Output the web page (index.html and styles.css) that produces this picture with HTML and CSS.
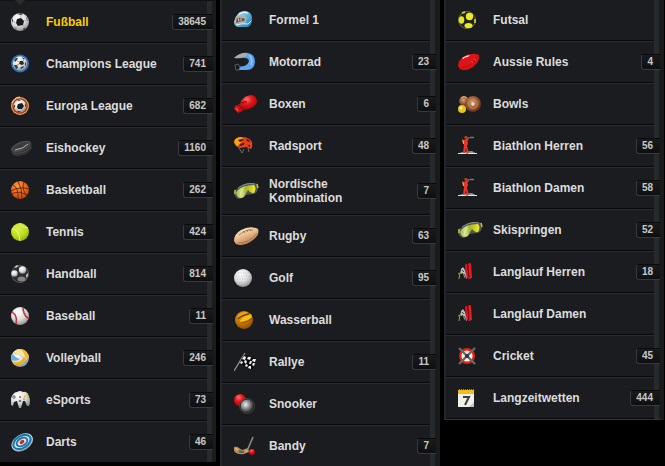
FILE: index.html
```html
<!DOCTYPE html>
<html lang="de">
<head>
  <meta charset="UTF-8">
  <meta name="viewport" content="width=device-width, initial-scale=1">
  <title>Sportarten</title>
  <link rel="stylesheet" href="styles.css">
</head>
<body>

<!-- Icons -->
<svg class="sprite" aria-hidden="true">
  <defs>
    <radialGradient id="g-white" cx=".4" cy=".3" r=".75"><stop offset="0" stop-color="#fff"/><stop offset=".55" stop-color="#dcdcdc"/><stop offset="1" stop-color="#888"/></radialGradient>
    <radialGradient id="g-orange" cx=".4" cy=".3" r=".75"><stop offset="0" stop-color="#ff9a3c"/><stop offset=".6" stop-color="#e8631a"/><stop offset="1" stop-color="#b53c08"/></radialGradient>
    <radialGradient id="g-lime" cx=".4" cy=".3" r=".75"><stop offset="0" stop-color="#e0f048"/><stop offset=".6" stop-color="#bcdc1c"/><stop offset="1" stop-color="#8dae08"/></radialGradient>
    <radialGradient id="g-red" cx=".4" cy=".3" r=".75"><stop offset="0" stop-color="#ff7a70"/><stop offset=".4" stop-color="#e8181c"/><stop offset="1" stop-color="#a00408"/></radialGradient>
    <radialGradient id="g-black" cx=".4" cy=".4" r=".65"><stop offset="0" stop-color="#f0f0f0"/><stop offset=".5" stop-color="#808080"/><stop offset="1" stop-color="#151515"/></radialGradient>
    <radialGradient id="g-brown" cx=".45" cy=".4" r=".65"><stop offset="0" stop-color="#d9a27a"/><stop offset=".5" stop-color="#a0623a"/><stop offset="1" stop-color="#4c2610"/></radialGradient>
    <radialGradient id="g-gold" cx=".4" cy=".3" r=".75"><stop offset="0" stop-color="#e8a010"/><stop offset=".5" stop-color="#c87808"/><stop offset="1" stop-color="#8a4a04"/></radialGradient>
    <linearGradient id="g-rugby" x1="0" y1="0" x2=".6" y2="1"><stop offset="0" stop-color="#fff0d4"/><stop offset=".5" stop-color="#eac294"/><stop offset="1" stop-color="#b07840"/></linearGradient>
    <linearGradient id="g-sky" x1="0" y1="0" x2="1" y2="1"><stop offset="0" stop-color="#dff3fb"/><stop offset=".5" stop-color="#5fb6dc"/><stop offset="1" stop-color="#1478b4"/></linearGradient>
    <linearGradient id="g-lens"><stop offset="0" stop-color="#a9bf52"/><stop offset=".3" stop-color="#d4e08a"/><stop offset=".5" stop-color="#a4b820"/><stop offset="1" stop-color="#f4ea30"/></linearGradient>
  </defs>

  <symbol id="football" viewBox="0 0 25 20">
    <circle cx="9" cy="10" r="9" fill="url(#g-white)"/>
    <path d="M6 7l4-1 3 3-1 4-5 1-2-3z" fill="#181818"/>
    <path d="M6 2l4-1 2 1-2 1zM1 8l1-2 0 3-1 2zM15 5l1 1 1 3-1-1zM3 15l2 1 1 2-2-2zM12 17l1-1 2 0-2 2z" fill="#3c3c3c"/>
    <path d="M10 6V3M13 9l3-1M12 13l2 3M7 14l-2 2M5 11l-3-2" stroke="#999" stroke-width=".6" fill="none"/>
  </symbol>

  <symbol id="champions" viewBox="0 0 25 20">
    <circle cx="9" cy="9.500" r="9" fill="#2c70c6"/>
    <circle cx="9" cy="9.500" r="7.200" fill="url(#g-white)"/>
    <path d="M9 7l3 0 1 3-2 1-3-1z" fill="#2a2a2a"/>
    <path d="M3 6l2-2 2 0-1 2-2 2zM11 3l3 2-2 0zM3 11l3 0 1 3-2 1zM9 14l3-2 1 1-3 2zM14 8l1 1 0 3-1-1z" fill="#3a3a3a"/>
    <path d="M6 7l3 1M6 11l2-1M12 7l1-2" stroke="#888" stroke-width=".8"/>
  </symbol>

  <symbol id="europa" viewBox="0 0 25 20">
    <circle cx="9" cy="10" r="9" fill="#f0a83c"/>
    <circle cx="9" cy="10" r="7.800" fill="#a8341c"/>
    <circle cx="9" cy="10" r="6.400" fill="url(#g-white)"/>
    <path d="M7 8l4-1 2 3-2 3-4 0-1-2z" fill="#1c1c1c"/>
    <path d="M6 4l4 0-2 1zM3 9l1 0 0 3-1-1zM14 7l1 2 0 2-1-1zM6 15l2 0 2 1-3 0z" fill="#333"/>
    <path d="M1 7a9 9 0 0 1 8-6" stroke="#f8e4b0" fill="none"/>
  </symbol>

  <symbol id="puck" viewBox="0 0 25 20">
    <path d="M0 11L1 16Q3 19 9 18Q15 17 19 13Q21 11 21 9L20 4Z" fill="#323232"/>
    <ellipse cx="10" cy="8.500" rx="10.500" ry="4.500" transform="rotate(-21 10 8.500)" fill="#4c4c4c"/>
    <ellipse cx="10" cy="8.500" rx="8.500" ry="3" transform="rotate(-21 10 8.500)" fill="#3a3a3a"/>
    <path d="M4 12Q12 11 17 6" stroke="#b8b8b8" fill="none"/>
    <path d="M2 15Q13 17 20 9" stroke="#4a4a4a" fill="none"/>
  </symbol>

  <symbol id="basketball" viewBox="0 0 25 20">
    <circle cx="9" cy="10" r="9" fill="url(#g-orange)"/>
    <path d="M0 11Q9 6 18 9M7 1Q11 8 11 19M2 5Q8 8 7 19M13 2Q10 9 16 16M1 14q6-4 15 1" stroke="#5e240c" stroke-width=".9" fill="none"/>
  </symbol>

  <symbol id="tennis" viewBox="0 0 25 20">
    <circle cx="9" cy="10" r="9" fill="url(#g-lime)"/>
    <path d="M1 7Q8 7 9 19M9 1q0 4 8 5" stroke="#ecf69c" fill="none"/>
  </symbol>

  <symbol id="handball" viewBox="0 0 25 20">
    <circle cx="9" cy="10" r="9" fill="#5a5a5a"/>
    <circle cx="9" cy="10" r="8" fill="#2c2c2c"/>
    <circle cx="11.500" cy="6" r="3.700" fill="url(#g-white)"/>
    <circle cx="3.500" cy="9.500" r="3.200" fill="url(#g-white)"/>
    <ellipse cx="10.500" cy="15" rx="4" ry="2.500" fill="#858585"/>
    <path d="M15 11l2-2 0 3-2 2zM3 3l3-2 2 1-3 2z" fill="#bbb"/>
  </symbol>

  <symbol id="baseball" viewBox="0 0 25 20">
    <circle cx="9" cy="10" r="9" fill="url(#g-white)"/>
    <path d="M1 6Q7 10 5 18M12 2Q12 9 18 13" stroke="#c8202c" stroke-width="1.400" fill="none"/>
    <path d="M3 9l2-1M4 12h2M4 15l2 0M12 6l2-1M13 9l2-2" stroke="#d8505a" stroke-width=".8"/>
  </symbol>

  <symbol id="volleyball" viewBox="0 0 25 20">
    <circle cx="9" cy="10" r="9" fill="url(#g-white)"/>
    <path d="M9 1Q16 1 18 9L14 10Q14 5 9 1Z" fill="#f5bd1c"/>
    <path d="M2 5Q5 1 8 1Q12 5 12 9Q8 4 2 5Z" fill="#fbe28a"/>
    <path d="M1 14Q9 16 13 9L15 11Q12 18 4 17Z" fill="#f0b418"/>
    <path d="M0 10Q0 8 2 6Q4 10 9 11Q5 14 1 12ZM12 16l5-5q0 4-4 7z" fill="#68b0dc"/>
    <path d="M3 5Q8 6 13 10M5 17Q13 17 17 11" stroke="#b9a468" stroke-width=".6" fill="none"/>
  </symbol>

  <symbol id="gamepad" viewBox="0 0 25 20">
    <path d="M1 6Q3 2 6 2Q9 0 12 2Q16 1 18 6Q20 12 18 16L16 16L14 11L12 11L10 18L8 18L6 11L3 12L2 16L0 15Q-1 10 1 6Z" fill="url(#g-white)"/>
    <path d="M1 7h4M3 5v4" stroke="#777" stroke-width="1.200"/>
    <circle cx="9" cy="7" r="1" fill="#d83030"/>
    <circle cx="9" cy="11" r="1.300" fill="#777"/>
    <circle cx="16" cy="4.500" r="1" fill="#e8b820"/><circle cx="14" cy="6.500" r="1" fill="#e8b820"/><circle cx="17" cy="7" r="1" fill="#e8b820"/>
    <circle cx="13" cy="9" r=".8" fill="#3c9c50"/>
  </symbol>

  <symbol id="darts" viewBox="0 0 25 20">
    <g transform="rotate(-32 11 10)">
      <ellipse cx="11" cy="11" rx="11.500" ry="7.500" fill="#8a9098"/>
      <ellipse cx="11" cy="10" rx="11.500" ry="7.500" fill="#dce8f0"/>
      <ellipse cx="11" cy="10" rx="9.500" ry="6" fill="none" stroke="#1c78ac" stroke-width="2.200"/>
      <ellipse cx="11" cy="10" rx="5.800" ry="3.600" fill="none" stroke="#1c78ac" stroke-width="2"/>
      <ellipse cx="11" cy="10" rx="2.600" ry="1.800" fill="#e02020"/>
    </g>
  </symbol>

  <symbol id="formel" viewBox="0 0 25 20">
    <path d="M2 7Q5 0 12 1Q18 2 18 9Q18 15 14 17L3 17Q0 15 0 12Z" fill="url(#g-sky)"/>
    <path d="M2 6Q8 5 13 7L12 13Q6 13 1 15L0 12Z" fill="#b0b0ae"/>
    <path d="M3 8Q7 7 11 9L10 11Q6 11 2 13Z" fill="#5a5854"/>
    <path d="M4 8l1 3M7 8l0 3" stroke="#d8c8b4"/>
    <path d="M2 15q6-2 12-1l3-3" stroke="#e4f4fa" fill="none"/>
    <path d="M5 4q4-3 9-1" stroke="#fff" fill="none"/>
  </symbol>

  <symbol id="motorrad" viewBox="0 0 25 20">
    <path d="M0 6Q5 1 12 1Q21 1 21 10Q20 18 13 18L5 18L3 14Q10 16 14 11Q15 8 11 6Z" fill="#5ca4f0"/>
    <path d="M0 6Q7 0 14 1L12 4Q10 7 0 6Z" fill="#a8acb0"/>
    <path d="M7 6Q14 5 15 9Q14 13 9 14L6 14Q12 13 13 10Q12 7 7 7Z" fill="#1c2228"/>
    <path d="M15 3q4 4 2 10" stroke="#94c6f8" stroke-width="1.500" fill="none"/>
    <path d="M1 13L4 12L6 15L5 18L2 18Z" fill="#17191b" stroke="#777" stroke-width=".7"/>
  </symbol>

  <symbol id="boxen" viewBox="0 0 25 20">
    <path d="M7 7Q11 1 18 1Q23 3 23 8Q22 12 17 14L11 16L6 11Z" fill="url(#g-red)"/>
    <path d="M1 12L6 10L10 16L4 19L0 15Z" fill="#d01216"/>
    <path d="M5 11l4 6M8 9q2-2 5-1" stroke="#6c0408" fill="none"/>
    <path d="M2 14l2 3" stroke="#f47a70"/>
  </symbol>

  <symbol id="radsport" viewBox="0 0 25 20">
    <path d="M0 6Q1 1 8 1Q15 1 18 6Q19 11 17 13L12 11L6 12Q1 11 0 6Z" fill="#e4401c"/>
    <path d="M0 6Q1 1 8 1L9 4L4 10Q1 9 0 6Z" fill="#f6a41c"/>
    <path d="M4 4l4-1 2 1-4 2zM5 9l4-2 2 1-4 2zM12 3l3 1 1 2-3-1zM13 9l3 0 0 2z" fill="#44140c"/>
    <path d="M5 12l3 5 2-4M14 12l1 4" stroke="#707478" stroke-width=".9" fill="none"/>
  </symbol>

  <symbol id="goggles" viewBox="0 0 25 20">
    <path d="M1 9L0 13Q2 18 6 18L12 14L19 13Q24 12 24 7L23 3Q14 0 6 6Z" fill="#50565a"/>
    <path d="M3 10Q8 4 20 4Q23 7 20 12Q17 13 14 9Q12 12 10 16Q6 18 4 16Q1 13 3 10Z" fill="url(#g-lens)"/>
    <path d="M4 7Q12 1 21 3" stroke="#a0a4a8" stroke-width=".8" fill="none"/>
    <path d="M1 9l0 4M23 3l1 4" stroke="#b8d410" stroke-width="1.500"/>
    <path d="M8 8l-2 7" stroke="#e4ecb0"/>
  </symbol>

  <symbol id="rugby" viewBox="0 0 25 20">
    <path d="M0 15Q0 8 7 4Q16 -1 24 3Q26 9 19 14Q10 21 2 18Z" fill="url(#g-rugby)"/>
    <path d="M5 9Q12 3 19 4M4 17Q16 17 23 7" stroke="#9a6c44" stroke-width=".8" fill="none"/>
    <path d="M9 5l2 2M12 4l2 2M15 3l2 2" stroke="#806048" stroke-width=".7"/>
  </symbol>

  <symbol id="golf" viewBox="0 0 25 20">
    <circle cx="9" cy="10" r="9" fill="url(#g-white)"/>
    <path d="M4 5h11M2 8h14M3 11h13M3 14h12M6 17h7" stroke="#b4b4b4" stroke-width=".8" stroke-dasharray="1 1.500"/>
  </symbol>

  <symbol id="wasserball" viewBox="0 0 25 20">
    <circle cx="10" cy="10" r="9" fill="url(#g-gold)"/>
    <path d="M6 11Q9 6 17 4L18 7Q14 11 7 12Z" fill="#f8c010"/>
    <path d="M4 6Q7 2 12 2L14 3Q8 5 5 8Z" fill="#f0a810"/>
    <path d="M4 9Q8 5 15 4" stroke="#784404" stroke-width="1.300" fill="none"/>
    <path d="M7 13Q14 12 19 8" stroke="#84500a" fill="none"/>
  </symbol>

  <symbol id="rallye" viewBox="0 0 25 20">
    <path d="M0 19L11 1" stroke="#999" stroke-width="1.200"/>
    <path d="M10 3Q14 6 22 6L19 17Q11 16 6 10Z" fill="#0b0b0b"/>
    <path d="M10 4l2 1-1 3-3-1zM14 5l3 0-1 3-3-1zM19 7l3 0-1 3-3-1zM11 8l2 1-1 3-2-2zM16 9l2 0-1 3-2 0zM7 9l2 1-1 2-2-1zM12 12l2 1-1 2-2-1zM19 11l2 0-1 3-2-1zM15 14l2 0 0 3-3-1z" fill="#f4f4f4"/>
  </symbol>

  <symbol id="snooker" viewBox="0 0 25 20">
    <circle cx="6" cy="6" r="6" fill="url(#g-red)"/>
    <circle cx="13" cy="12" r="7" fill="url(#g-black)" stroke="#080808"/>
    <circle cx="13" cy="12" r="7.300" fill="none" stroke="#666" stroke-width=".7"/>
  </symbol>

  <symbol id="bandy" viewBox="0 0 25 20">
    <path d="M19 1L13 15" stroke="#8c8c84" stroke-width="1.600"/>
    <path d="M0 11Q3 10 5 12L8 14L14 12L15 16L10 18Q3 19 0 15Z" fill="#b98a5c"/>
    <path d="M5 14l5 1 0 2-5 0z" fill="#5c6850"/>
    <path d="M1 12l3 2M12 14l1 2" stroke="#e8cc9c"/>
    <circle cx="18" cy="16" r="3" fill="url(#g-red)"/>
  </symbol>

  <symbol id="futsal" viewBox="0 0 25 20">
    <circle cx="9" cy="10" r="8.500" fill="#20221c" stroke="#686c40"/>
    <circle cx="11.500" cy="6.500" r="3.700" fill="#ecea28"/>
    <ellipse cx="3.500" cy="10" rx="2.800" ry="3.700" fill="#e4e424"/>
    <ellipse cx="10.500" cy="15.500" rx="4" ry="2.600" fill="#ecea28"/>
    <path d="M4 3l3-1M17 9l0 4" stroke="#e4e424" stroke-width="1.500"/>
  </symbol>

  <symbol id="aussie" viewBox="0 0 25 20">
    <path d="M0 14Q0 8 7 4Q15 0 21 3Q22 9 16 14Q9 20 2 17Z" fill="#dc1418"/>
    <path d="M4 6Q8 3 12 3L10 5Q7 5 5 7Z" fill="#f8c8c0"/>
    <path d="M3 16Q15 14 20 4" stroke="#a8080c" stroke-width=".8" fill="none"/>
    <path d="M13 9l2 2M16 7l2 1" stroke="#f08078" stroke-width=".6"/>
  </symbol>

  <symbol id="bowls" viewBox="0 0 25 20">
    <circle cx="6" cy="7" r="5" fill="url(#g-brown)"/>
    <path d="M3 4q3-3 6 0" stroke="#e0b890" fill="none"/>
    <circle cx="15" cy="10" r="8" fill="url(#g-brown)"/>
    <circle cx="15" cy="10" r="4.500" fill="none" stroke="#c08458"/>
    <circle cx="15" cy="10" r="1.700" fill="#f2d8bc"/>
    <circle cx="4" cy="15" r="4" fill="#e4c420"/>
    <circle cx="3" cy="14" r="1.500" fill="#fbf090"/>
  </symbol>

  <symbol id="biathlon" viewBox="0 0 25 20">
    <path d="M0 18L4 16L14 15L19 18Z" fill="#8e9296"/>
    <path d="M0 17.500h8M10 17.500h9" stroke="#e4e6e8"/>
    <path d="M5 4L9 3L10 7L9 10L11 17L9 17L8 12L7 17L5 17L6 9Z" fill="#e8362a"/>
    <circle cx="8" cy="1.500" r="1.600" fill="#b84028"/>
    <path d="M4 3l2 2 0 3-1 0z" fill="#f4a020"/>
    <path d="M8 5l3-3" stroke="#e84030" stroke-width="1.300"/>
    <path d="M9 1.500h7" stroke="#505860"/><path d="M12 1.500h4" stroke="#5c7ca0" stroke-width="1.500"/>
  </symbol>

  <symbol id="langlauf" viewBox="0 0 25 20">
    <path d="M7 4Q7 1 9 2L11 17L8 15Z" fill="#d0181e"/>
    <path d="M10 2Q12 0 13 2L14 16L11 17Z" fill="#e41c24"/>
    <path d="M10 3l1 13" stroke="#7c0810" stroke-width=".8"/>
    <path d="M1 17Q1 12 4 7M0 12l4-2" stroke="#98ac28" fill="none"/>
    <path d="M3 7L5 5L7 8L9 17L6 15L5 11L3 12Z" fill="#b8bcc0"/>
    <path d="M4 8l2 2M6 12l2 4" stroke="#3c4044"/>
  </symbol>

  <symbol id="cricket" viewBox="0 0 25 20">
    <circle cx="9" cy="10" r="6.800" fill="#f6f0ee" stroke="#e8200c" stroke-width="2.400"/>
    <path d="M1 2L17 18M17 2L1 18" stroke="#66686a" stroke-width="2.400"/>
    <circle cx="9" cy="10" r="2" fill="#303234"/>
  </symbol>

  <symbol id="kalender" viewBox="0 0 25 20">
    <path d="M0 2h16v17H0z" fill="#f0f0ec"/>
    <path d="M0 2h16v4H0z" fill="#f0c018"/>
    <path d="M1 1.500h15" stroke="#8c8878" stroke-dasharray="1 1"/>
    <path d="M5 9h6L7 17" stroke="#404040" stroke-width="2" fill="none"/>
    <path d="M11 19L16 14V19Z" fill="#c4c4bc"/>
  </symbol>
</svg>

<main class="sports">

  <!-- Spalte 1 -->
  <nav class="column column-first" aria-label="Ballsport">
    <ul class="list">
      <li><a class="sport active" href="#"><svg class="icon"><use href="#football"/></svg><span class="name">Fußball</span><span class="count">38645</span></a></li>
      <li><a class="sport" href="#"><svg class="icon"><use href="#champions"/></svg><span class="name">Champions League</span><span class="count">741</span></a></li>
      <li><a class="sport" href="#"><svg class="icon"><use href="#europa"/></svg><span class="name">Europa League</span><span class="count">682</span></a></li>
      <li><a class="sport" href="#"><svg class="icon"><use href="#puck"/></svg><span class="name">Eishockey</span><span class="count">1160</span></a></li>
      <li><a class="sport" href="#"><svg class="icon"><use href="#basketball"/></svg><span class="name">Basketball</span><span class="count">262</span></a></li>
      <li><a class="sport" href="#"><svg class="icon"><use href="#tennis"/></svg><span class="name">Tennis</span><span class="count">424</span></a></li>
      <li><a class="sport" href="#"><svg class="icon"><use href="#handball"/></svg><span class="name">Handball</span><span class="count">814</span></a></li>
      <li><a class="sport" href="#"><svg class="icon"><use href="#baseball"/></svg><span class="name">Baseball</span><span class="count">11</span></a></li>
      <li><a class="sport" href="#"><svg class="icon"><use href="#volleyball"/></svg><span class="name">Volleyball</span><span class="count">246</span></a></li>
      <li><a class="sport" href="#"><svg class="icon"><use href="#gamepad"/></svg><span class="name">eSports</span><span class="count">73</span></a></li>
      <li><a class="sport" href="#"><svg class="icon"><use href="#darts"/></svg><span class="name">Darts</span><span class="count">46</span></a></li>
    </ul>
  </nav>

  <!-- Spalte 2 -->
  <nav class="column" aria-label="Weitere Sportarten">
    <ul class="list">
      <li><a class="sport" href="#"><svg class="icon"><use href="#formel"/></svg><span class="name">Formel 1</span></a></li>
      <li><a class="sport" href="#"><svg class="icon"><use href="#motorrad"/></svg><span class="name">Motorrad</span><span class="count">23</span></a></li>
      <li><a class="sport" href="#"><svg class="icon"><use href="#boxen"/></svg><span class="name">Boxen</span><span class="count">6</span></a></li>
      <li><a class="sport" href="#"><svg class="icon"><use href="#radsport"/></svg><span class="name">Radsport</span><span class="count">48</span></a></li>
      <li><a class="sport" href="#"><svg class="icon"><use href="#goggles"/></svg><span class="name">Nordische<br>Kombination</span><span class="count">7</span></a></li>
      <li><a class="sport" href="#"><svg class="icon"><use href="#rugby"/></svg><span class="name">Rugby</span><span class="count">63</span></a></li>
      <li><a class="sport" href="#"><svg class="icon"><use href="#golf"/></svg><span class="name">Golf</span><span class="count">95</span></a></li>
      <li><a class="sport" href="#"><svg class="icon"><use href="#wasserball"/></svg><span class="name">Wasserball</span></a></li>
      <li><a class="sport" href="#"><svg class="icon"><use href="#rallye"/></svg><span class="name">Rallye</span><span class="count">11</span></a></li>
      <li><a class="sport" href="#"><svg class="icon"><use href="#snooker"/></svg><span class="name">Snooker</span></a></li>
      <li><a class="sport" href="#"><svg class="icon"><use href="#bandy"/></svg><span class="name">Bandy</span><span class="count">7</span></a></li>
    </ul>
  </nav>

  <!-- Spalte 3 -->
  <nav class="column column-last" aria-label="Wintersport und mehr">
    <ul class="list">
      <li><a class="sport" href="#"><svg class="icon"><use href="#futsal"/></svg><span class="name">Futsal</span></a></li>
      <li><a class="sport" href="#"><svg class="icon"><use href="#aussie"/></svg><span class="name">Aussie Rules</span><span class="count">4</span></a></li>
      <li><a class="sport" href="#"><svg class="icon"><use href="#bowls"/></svg><span class="name">Bowls</span></a></li>
      <li><a class="sport" href="#"><svg class="icon"><use href="#biathlon"/></svg><span class="name">Biathlon Herren</span><span class="count">56</span></a></li>
      <li><a class="sport" href="#"><svg class="icon"><use href="#biathlon"/></svg><span class="name">Biathlon Damen</span><span class="count">58</span></a></li>
      <li><a class="sport" href="#"><svg class="icon"><use href="#goggles"/></svg><span class="name">Skispringen</span><span class="count">52</span></a></li>
      <li><a class="sport" href="#"><svg class="icon"><use href="#langlauf"/></svg><span class="name">Langlauf Herren</span><span class="count">18</span></a></li>
      <li><a class="sport" href="#"><svg class="icon"><use href="#langlauf"/></svg><span class="name">Langlauf Damen</span></a></li>
      <li><a class="sport" href="#"><svg class="icon"><use href="#cricket"/></svg><span class="name">Cricket</span><span class="count">45</span></a></li>
      <li><a class="sport" href="#"><svg class="icon"><use href="#kalender"/></svg><span class="name">Langzeitwetten</span><span class="count">444</span></a></li>
    </ul>
  </nav>

</main>
</body>
</html>
```

FILE: styles.css
```css
* {
  margin: 0;
  padding: 0;
  box-sizing: border-box;
}

body {
  font-family: "Liberation Sans", Arial, sans-serif;
  background: #000;
  color: #dcdcdc;
}

.sprite {
  position: absolute;
  width: 0;
  height: 0;
}

.sports {
  display: grid;
  grid-template-columns: 216fr 220fr 220fr;
  gap: 4px;
  align-items: start;
  padding-right: 1px;
}

/* Spalten */
.column {
  background: #1b1c1f;
  border-left: 2px solid #242527;
  border-right: 5px solid #1a1b1d;
}

.column-first {
  position: relative;
  border-left: 0;
  border-right-width: 4px;
  border-top: 1px solid #111214;
}

.column-last {
  border-bottom: 1px solid #34373a;
}

/* Pfeil oben */
.column-first::before {
  content: '';
  position: absolute;
  top: -1px;
  left: 15px;
  border: 5px solid transparent;
  border-top-color: #2c2d31;
  border-bottom: 0;
}

.list {
  list-style: none;
  border-right: 5px solid #272a2d;
}

/* Zeilen */
.sport {
  display: flex;
  align-items: center;
  min-height: 42px;
  padding: 9px 0 9px 12px;
  border-top: 1px solid #2a2b2f;
  border-bottom: 1px solid #0a0a0c;
  color: inherit;
  font-size: 12px;
  font-weight: bold;
  line-height: 14px;
  text-decoration: none;
}

.column-first .sport {
  padding-left: 11px;
}

li:first-child .sport {
  min-height: 41px;
  border-top: 0;
}

.column-first li:first-child .sport {
  min-height: 42px;
}

li:last-child .sport {
  min-height: 41px;
  border-bottom: 0;
}

.column-last li:last-child .sport {
  min-height: 42px;
  border-bottom: 1px solid #0a0a0c;
}

.sport:hover .name,
.active .name {
  color: #ffcc00;
}

.icon {
  flex: none;
  width: 25px;
  height: 20px;
  margin-right: 10px;
  overflow: visible;
}

.name {
  flex: 1;
}

/* Anzahl, ragt über die Leiste rechts */
.count {
  position: relative;
  height: 16px;
  margin-right: -6px;
  padding: 0 7px 0 5px;
  background: linear-gradient(#1a1b1c, #0e0f10);
  border: 1px solid #0a0a0b;
  border-left-color: #37393b;
  border-bottom-color: #37393b;
  border-right: 0;
  border-radius: 3px 0 0 3px;
  color: #c8c8c8;
  font-size: 10px;
}
```
